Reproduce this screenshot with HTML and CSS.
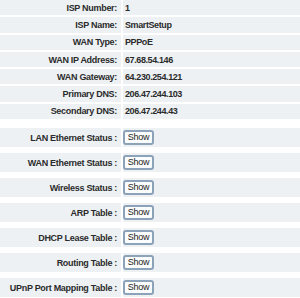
FILE: index.html
```html
<!DOCTYPE html>
<html lang="en">
<head>
  <meta charset="UTF-8">
  <title>Status</title>
  <link rel="stylesheet" href="styles.css">
</head>
<body>
  <div id="status">
    <div class="info">
      <div class="lbl">ISP Number:</div><div class="val">1</div>
      <div class="lbl">ISP Name:</div><div class="val">SmartSetup</div>
      <div class="lbl">WAN Type:</div><div class="val">PPPoE</div>
      <div class="lbl">WAN IP Address:</div><div class="val">67.68.54.146</div>
      <div class="lbl">WAN Gateway:</div><div class="val">64.230.254.121</div>
      <div class="lbl">Primary DNS:</div><div class="val">206.47.244.103</div>
      <div class="lbl">Secondary DNS:</div><div class="val">206.47.244.43</div>
    </div>

    <!-- show buttons -->
    <div class="tables">
      <div class="lbl">LAN Ethernet Status :</div><div class="val"><button class="show-btn">Show</button></div>
      <div class="lbl">WAN Ethernet Status :</div><div class="val"><button class="show-btn">Show</button></div>
      <div class="lbl">Wireless Status :</div><div class="val"><button class="show-btn">Show</button></div>
      <div class="lbl">ARP Table :</div><div class="val"><button class="show-btn">Show</button></div>
      <div class="lbl">DHCP Lease Table :</div><div class="val"><button class="show-btn">Show</button></div>
      <div class="lbl">Routing Table :</div><div class="val"><button class="show-btn">Show</button></div>
      <div class="lbl">UPnP Port Mapping Table :</div><div class="val"><button class="show-btn">Show</button></div>
    </div>
  </div>
</body>
</html>
```

FILE: styles.css
```css
* { margin: 0; padding: 0; box-sizing: border-box; }
body {
  background: #fff;
  font-family: "Liberation Sans", Arial, sans-serif;
  color: #2b2b2b;
}
#status { width: 300px; }
.info, .tables {
  display: grid;
  grid-template-columns: 121px 1fr;
  column-gap: 2px;
}
.info { row-gap: 2px; }
.info .lbl, .info .val { height: 15.3px; }
.tables { margin-top: 9px; row-gap: 6px; }
.tables .lbl, .tables .val { height: 19px; }
.lbl, .val {
  background: #edf1f4;
  display: flex;
  align-items: center;
  font-size: 9px;
  font-weight: bold;
  white-space: nowrap;
}
.lbl { justify-content: flex-end; padding-right: 4px; letter-spacing: -0.3px; }
.val { padding-left: 2px; letter-spacing: -0.4px; }
.show-btn {
  width: 31px;
  height: 15px;
  margin-left: -2px;
  border: 2px solid #8ca2b8;
  border-radius: 3px;
  background: #fbfcfd;
  font-family: "Liberation Sans", Arial, sans-serif;
  font-size: 9px;
  font-weight: normal;
  letter-spacing: -0.2px;
  color: #222;
  line-height: 11px;
  cursor: pointer;
}
```
